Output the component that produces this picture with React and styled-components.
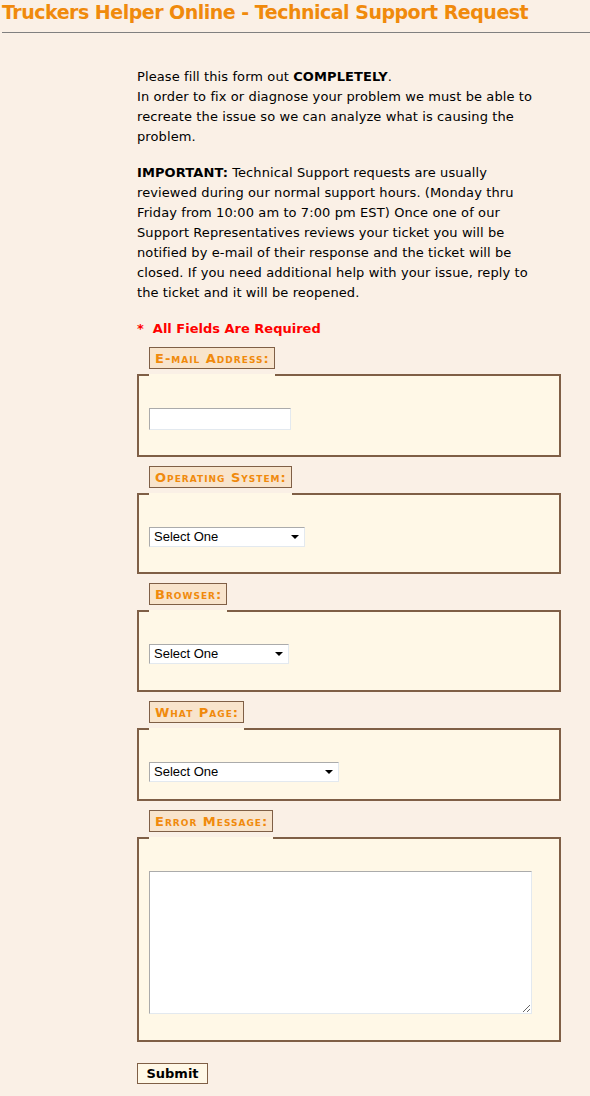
import React from "react";
import styled, { createGlobalStyle } from "styled-components";

const Global = createGlobalStyle`
  html, body {
    margin: 0;
    padding: 0;
    background: #faf0e6;
  }
  body {
    font-family: "DejaVu Sans", Verdana, sans-serif;
    font-size: 13px;
    color: #000;
  }
`;

const Page = styled.div`
  min-height: 1096px;
`;

const Header = styled.header`
  margin-left: 2px;
  padding-bottom: 8px;
  border-bottom: 1px solid #808080;
`;

const Title = styled.h1`
  margin: 0;
  font-size: 19px;
  letter-spacing: -0.5px;
  line-height: 24px;
  font-weight: bold;
  color: #f08a0c;
`;

const Main = styled.main`
  margin: 34px 0 0 137px;
  width: 424px;
`;

const Para = styled.p`
  margin: 0 0 16px;
  width: 405px;
  line-height: 20px;
  letter-spacing: 0.1px;
`;

const Required = styled.div`
  color: #ff0000;
  font-weight: bold;
  line-height: 20px;
  white-space: pre;
`;

const Fieldset = styled.fieldset`
  box-sizing: border-box;
  width: 424px;
  min-width: 0;
  margin: ${(p) => p.$gap}px 0 0;
  padding: 22px 10px ${(p) => p.$bottom}px;
  border: 2px solid #7f5f46;
  background: #fff8e7;
`;

const Legend = styled.legend`
  position: relative;
  top: -17px;
  box-sizing: border-box;
  height: 22px;
  padding: 2px 4px 0 5px;
  border: 1px solid #7f5f46;
  background: #f8e4cc;
  color: #f08a0c;
  font-weight: bold;
  font-size: 13px;
  letter-spacing: 1px;
  line-height: 17px;
  font-variant: small-caps;
`;

const fieldBorder = `
  box-sizing: border-box;
  display: block;
  margin: 0;
  border: 1px solid;
  border-color: #ababab #e3e9ef #e3e9ef #ababab;
  background: #fff;
  font-family: "Liberation Sans", Arial, sans-serif;
  font-size: 13px;
  color: #000;
  outline: none;
`;

const TextInput = styled.input`
  ${fieldBorder}
  width: 142px;
  height: 22px;
  padding: 2px 4px;
`;

const SelectWrap = styled.div`
  position: relative;
  width: ${(p) => p.$w}px;
  height: 20px;

  &::after {
    content: "";
    position: absolute;
    right: 6px;
    top: 8px;
    border-left: 4px solid transparent;
    border-right: 4px solid transparent;
    border-top: 4px solid #000;
    pointer-events: none;
  }
`;

const Select = styled.select`
  ${fieldBorder}
  appearance: none;
  -webkit-appearance: none;
  width: 100%;
  height: 20px;
  padding: 0 16px 0 4px;
  border-radius: 0;
  line-height: 18px;
`;

const TextArea = styled.textarea`
  ${fieldBorder}
  width: 383px;
  height: 143px;
  padding: 2px;
`;

const SubmitButton = styled.button`
  display: block;
  box-sizing: border-box;
  margin: 21px 0 10px;
  width: 71px;
  height: 21px;
  padding: 0;
  border: 1px solid #7f5f46;
  background: #fff8e7;
  font-family: "DejaVu Sans", Verdana, sans-serif;
  font-size: 13px;
  font-weight: bold;
  color: #000;
  cursor: pointer;
`;

function SelectField({ width }) {
  return (
    <SelectWrap $w={width}>
      <Select defaultValue="">
        <option value="">Select One</option>
      </Select>
    </SelectWrap>
  );
}

export default function App() {
  return (
    <Page>
      <Global />
      <Header>
        <Title>Truckers Helper Online - Technical Support Request</Title>
      </Header>
      <Main>
        <Para>
          Please fill this form out <b>COMPLETELY</b>.
          <br />
          In order to fix or diagnose your problem we must be able to recreate
          the issue so we can analyze what is causing the problem.
        </Para>
        <Para>
          <b>IMPORTANT:</b> Technical Support requests are usually reviewed
          during our normal support hours. (Monday thru Friday from 10:00 am to
          7:00 pm EST) Once one of our Support Representatives reviews your
          ticket you will be notified by e&#8209;mail of their response and the
          ticket will be closed. If you need additional help with your issue,
          reply to the ticket and it will be reopened.
        </Para>
        <Required>{"*  All Fields Are Required"}</Required>
        <form onSubmit={(e) => e.preventDefault()}>
          <Fieldset $gap={25} $bottom={25}>
            <Legend>E-mail Address:</Legend>
            <TextInput type="text" />
          </Fieldset>
          <Fieldset $gap={26} $bottom={25}>
            <Legend>Operating System:</Legend>
            <SelectField width={156} />
          </Fieldset>
          <Fieldset $gap={26} $bottom={26}>
            <Legend>Browser:</Legend>
            <SelectField width={140} />
          </Fieldset>
          <Fieldset $gap={26} $bottom={17}>
            <Legend>What Page:</Legend>
            <SelectField width={190} />
          </Fieldset>
          <Fieldset $gap={26} $bottom={26}>
            <Legend>Error Message:</Legend>
            <TextArea />
          </Fieldset>
          <SubmitButton type="submit">Submit</SubmitButton>
        </form>
      </Main>
    </Page>
  );
}
